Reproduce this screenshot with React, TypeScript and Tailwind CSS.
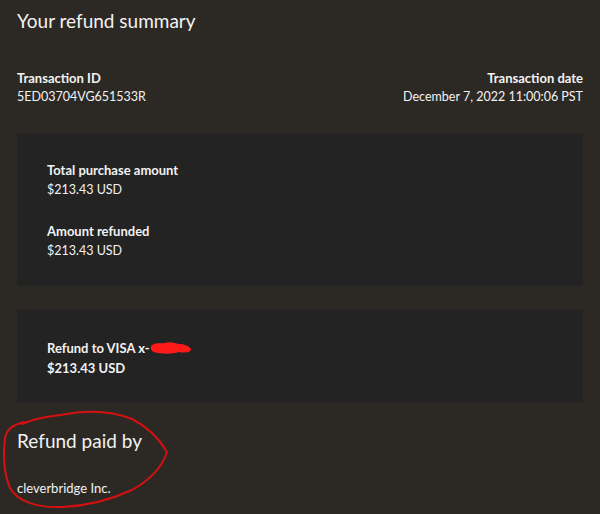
import React from 'react';

const Amount: React.FC<{ label: string; value: string; boldValue?: boolean }> = ({ label, value, boldValue }) => (
  <div className="flex flex-col">
    <span className="text-[13px] font-bold leading-[20px]">{label}</span>
    <span className={`leading-[20px] ${boldValue ? 'font-bold text-[13px]' : 'text-[12.5px]'}`}>{value}</span>
  </div>
);

export default function App() {
  return (
    <div
      className="relative w-[600px] h-[514px] overflow-hidden bg-[#2c2925] text-[#f2f2f2] px-[17px] pt-[8px]"
      style={{ fontFamily: 'Lato, "Open Sans", sans-serif' }}
    >
      {/* Header */}
      <h1 className="text-[19px] leading-[26px]">Your refund summary</h1>

      <div className="flex justify-between mt-[34px]">
        <div className="flex flex-col">
          <span className="text-[13px] font-bold leading-[20px]">Transaction ID</span>
          <span className="text-[12.5px] leading-[18px]">5ED03704VG651533R</span>
        </div>
        <div className="flex flex-col items-end">
          <span className="text-[13px] font-bold leading-[20px]">Transaction date</span>
          <span className="text-[12.5px] leading-[18px]">December 7, 2022 11:00:06 PST</span>
        </div>
      </div>

      {/* Amounts */}
      <div className="mt-[28px] bg-[#232323] h-[152px] px-[30px] pt-[26px] flex flex-col gap-[21px]">
        <Amount label="Total purchase amount" value="$213.43 USD" />
        <Amount label="Amount refunded" value="$213.43 USD" />
      </div>

      {/* Refund method */}
      <div className="mt-[24px] bg-[#232323] h-[93px] px-[30px] pt-[28px]">
        <div className="flex flex-col">
          <span className="text-[13px] font-bold leading-[20px] flex items-center">
            Refund to VISA x-
            <svg width="44" height="16" viewBox="0 0 44 16" className="ml-[-1px]">
              <path
                d="M2 6 C6 2 12 4 16 3 C20 1 26 3 30 4 C35 4 40 6 42 9 C42 13 34 13 30 12 C24 14 16 14 10 13 C5 13 1 11 2 6 Z"
                fill="#ff1a1a"
              />
            </svg>
          </span>
          <span className="text-[13px] font-bold leading-[20px]">$213.43 USD</span>
        </div>
      </div>

      {/* Paid by */}
      <h2 className="mt-[25px] text-[19px] leading-[26px]">Refund paid by</h2>
      <p className="mt-[25px] text-[13px] leading-[18px]">cleverbridge Inc.</p>

      {/* Hand-drawn annotation */}
      <svg className="absolute left-0 top-[405px] pointer-events-none" width="180" height="109" viewBox="0 405 180 109">
        <path
          d="M22 424 C40 416 58 416 66 414 C90 410 112 411 132 419 C148 427 160 440 167 452 C162 468 150 480 132 490 C110 500 88 506 62 507 C38 508 18 502 10 488 C4 474 3 455 5 438 C7 428 14 425 24 422"
          fill="none"
          stroke="#d41010"
          strokeWidth="2"
          strokeLinecap="round"
        />
      </svg>
    </div>
  );
}
